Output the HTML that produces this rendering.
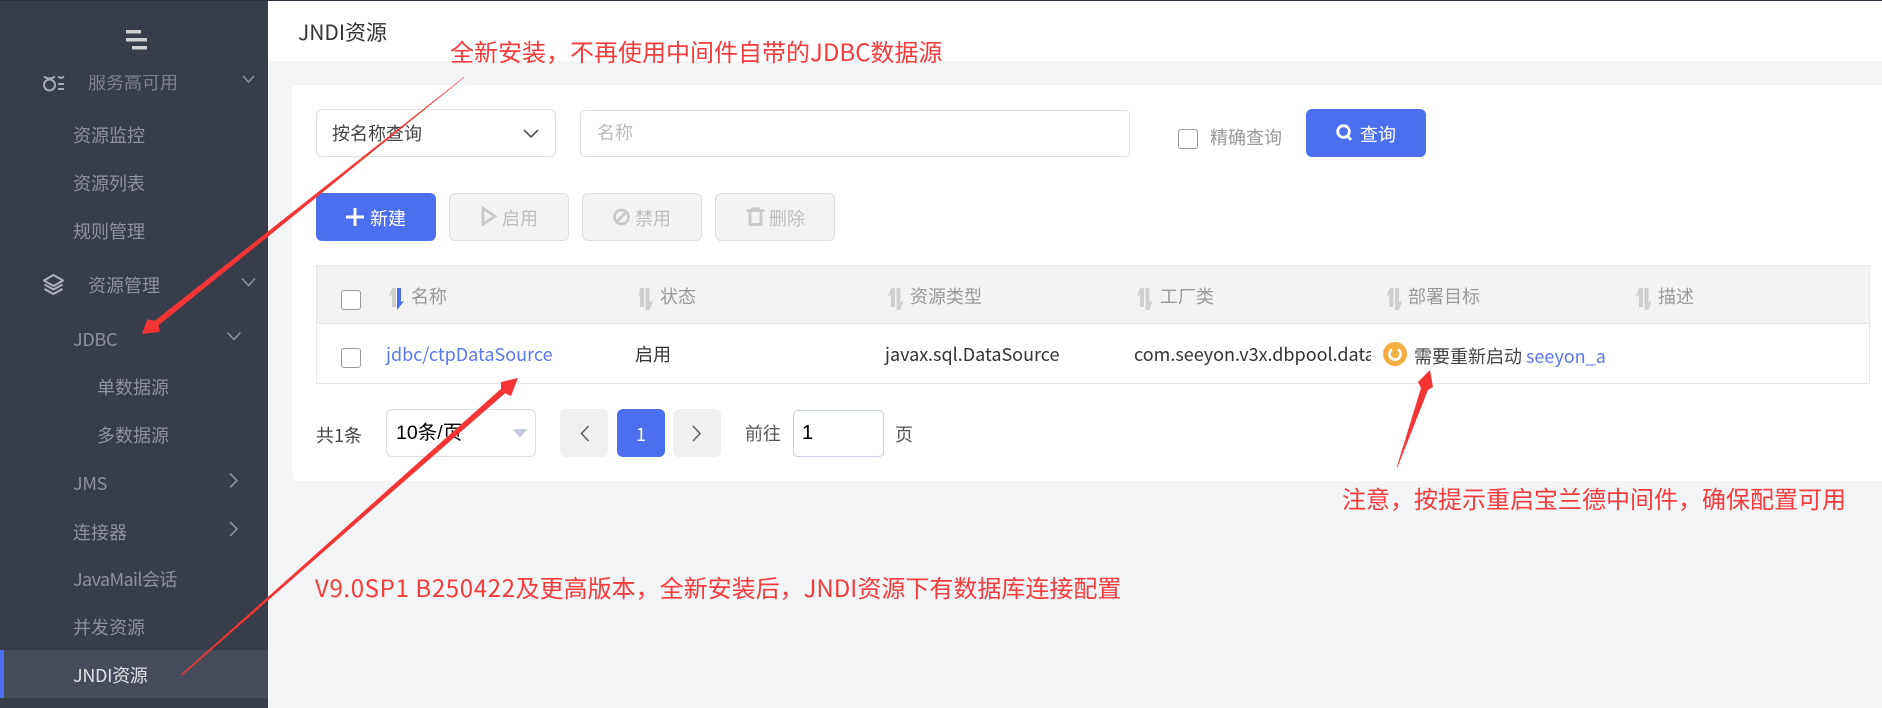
<!DOCTYPE html>
<html lang="zh-CN">
<head>
<meta charset="utf-8">
<title>JNDI资源</title>
<style>
html,body{margin:0;padding:0;width:1882px;height:708px;overflow:hidden;background:#f3f4f6}
body{position:relative;font-family:"Noto Sans CJK SC","Liberation Sans",sans-serif;font-size:18px;color:#333}
.b{position:absolute;box-sizing:border-box}
.t{position:absolute;white-space:nowrap;line-height:24px;font-size:18px}
.s{color:#8e929c}
.dis{background:#f3f3f3;border:1px solid #dedede;border-radius:6px;top:193px;height:48px;width:120px}
.gt{color:#bdbdbd}
.hd{color:#999}
.cb{width:20px;height:20px;background:#fff;border:1px solid #999;border-radius:3px}
.bl{color:#5b77ee}
.red{color:#f53b3b;font-size:24px;line-height:32px}
.lib{font-family:"Liberation Sans","Noto Sans CJK SC",sans-serif}
</style>
</head>
<body>
<!-- top line -->
<div class="b" style="left:268px;top:0;width:1614px;height:61px;background:#fff"></div>
<!-- sidebar -->
<div class="b" style="left:0;top:0;width:268px;height:708px;background:#383d4a"></div>
<div class="b" style="left:0;top:650px;width:268px;height:48px;background:#464c59"></div>
<div class="b" style="left:0;top:650px;width:4px;height:48px;background:#4a6eef"></div>
<div class="t s" style="left:88px;top:70px;color:#7e828c">服务高可用</div>
<div class="b" style="left:0;top:54px;width:268px;height:21px;background:#383d4a"></div>
<div class="t s" style="left:73px;top:123px">资源监控</div>
<div class="t s" style="left:73px;top:171px">资源列表</div>
<div class="t s" style="left:73px;top:219px">规则管理</div>
<div class="t s" style="left:88px;top:273px">资源管理</div>
<div class="t s" style="left:73px;top:327px;letter-spacing:-.3px">JDBC</div>
<div class="t s" style="left:97px;top:375px">单数据源</div>
<div class="t s" style="left:97px;top:423px">多数据源</div>
<div class="t s" style="left:73px;top:471px;letter-spacing:-.3px">JMS</div>
<div class="t s" style="left:73px;top:520px">连接器</div>
<div class="t s" style="left:73px;top:567px;letter-spacing:-.6px">JavaMail会话</div>
<div class="t s" style="left:73px;top:615px">并发资源</div>
<div class="t" style="left:73px;top:663px;color:#dfe1e6;letter-spacing:-.3px">JNDI资源</div>

<!-- header -->
<div class="t" style="left:298px;top:20px;color:#333;font-size:21px">JNDI资源</div>

<!-- card -->
<div class="b" style="left:292px;top:85px;width:1590px;height:396px;background:#fff;border-radius:6px 0 0 6px"></div>
<div class="b" style="left:316px;top:109px;width:240px;height:48px;border:1px solid #dcdfe6;border-radius:6px;background:#fff"></div>
<div class="t" style="left:332px;top:121px;color:#444">按名称查询</div>
<div class="b" style="left:580px;top:110px;width:550px;height:47px;border:1px solid #dcdfe6;border-radius:5px;background:#fff"></div>
<div class="t" style="left:597px;top:120px;color:#bbb">名称</div>
<div class="b cb" style="left:1178px;top:129px"></div>
<div class="t" style="left:1210px;top:125px;color:#999">精确查询</div>
<div class="b" style="left:1306px;top:109px;width:120px;height:48px;background:#4b6fef;border-radius:6px"></div>
<div class="t" style="left:1360px;top:122px;color:#fff">查询</div>

<!-- toolbar -->
<div class="b" style="left:316px;top:193px;width:120px;height:48px;background:#4b6fef;border-radius:6px"></div>
<div class="t" style="left:370px;top:206px;color:#fff">新建</div>
<div class="b dis" style="left:449px"></div>
<div class="t gt" style="left:502px;top:206px">启用</div>
<div class="b dis" style="left:582px"></div>
<div class="t gt" style="left:635px;top:206px">禁用</div>
<div class="b dis" style="left:715px"></div>
<div class="t gt" style="left:769px;top:206px">删除</div>

<!-- table -->
<div class="b" style="left:316px;top:265px;width:1554px;height:59px;background:#f3f3f3;border:1px solid #e6e6e6"></div>
<div class="b" style="left:316px;top:323px;width:1554px;height:61px;background:#fff;border:1px solid #e4e7ed;border-top:1px solid #e6e6e6"></div>
<div class="b cb" style="left:341px;top:290px"></div>
<div class="b cb" style="left:341px;top:348px"></div>
<div class="t hd" style="left:411px;top:284px">名称</div>
<div class="t hd" style="left:660px;top:284px">状态</div>
<div class="t hd" style="left:910px;top:284px">资源类型</div>
<div class="t hd" style="left:1160px;top:284px">工厂类</div>
<div class="t hd" style="left:1408px;top:284px">部署目标</div>
<div class="t hd" style="left:1658px;top:284px">描述</div>
<div class="t bl" style="left:386px;top:342px">jdbc/ctpDataSource</div>
<div class="t" style="left:635px;top:342px">启用</div>
<div class="t" style="left:885px;top:342px">javax.sql.DataSource</div>
<div class="t" style="left:1134px;top:342px;width:237px;overflow:hidden">com.seeyon.v3x.dbpool.datasource</div>
<div class="t" style="left:1414px;top:344px;color:#444">需要重新启动</div>
<div class="t bl" style="left:1526px;top:344px">seeyon_a</div>

<!-- pagination -->
<div class="t" style="left:316px;top:423px;color:#444">共1条</div>
<div class="b" style="left:386px;top:409px;width:150px;height:48px;border:1px solid #dcdfe6;border-radius:6px;background:#fff"></div>
<div class="t lib" style="left:396px;top:421px;font-size:19.5px;color:#000">10条/页</div>
<div class="b" style="left:560px;top:409px;width:48px;height:48px;background:#f0f0f0;border-radius:6px"></div>
<div class="b" style="left:617px;top:409px;width:48px;height:48px;background:#4b6fef;border-radius:6px"></div>
<div class="t" style="left:617px;top:422px;width:48px;text-align:center;color:#fff">1</div>
<div class="b" style="left:673px;top:409px;width:48px;height:48px;background:#f0f0f0;border-radius:6px"></div>
<div class="t" style="left:745px;top:421px;color:#555">前往</div>
<div class="b" style="left:793px;top:410px;width:91px;height:47px;border:1px solid #c5d0e6;border-radius:5px;background:#fff"></div>
<div class="t lib" style="left:802px;top:421px;font-size:20px;color:#000">1</div>
<div class="t" style="left:895px;top:422px;color:#555">页</div>

<!-- annotations -->
<div class="t red" style="left:450px;top:35px">全新安装，不再使用中间件自带的JDBC数据源</div>
<div class="t red" style="left:315px;top:571px"><span style="letter-spacing:.64px">V9.0SP1 B250422</span>及更高版本，全新安装后，JNDI资源下有数据库连接配置</div>
<div class="t red" style="left:1342px;top:482px">注意，按提示重启宝兰德中间件，确保配置可用</div>

<svg class="b" style="left:0;top:0" width="1882" height="708" viewBox="0 0 1882 708" xmlns="http://www.w3.org/2000/svg">
  <!-- top dark line -->
  <rect x="0" y="0" width="1882" height="1" fill="#2b3040"/>
  <!-- hamburger -->
  <g fill="#d0d0d0">
    <rect x="126" y="30" width="15" height="3.5"/>
    <rect x="126" y="38" width="21" height="3.5"/>
    <rect x="132" y="46" width="15" height="3.5"/>
  </g>
  <!-- service icon -->
  <g fill="none" stroke="#a8abb8" stroke-width="2">
    <circle cx="49.5" cy="85" r="5.5"/>
    <path d="M44 76.5q5.500 4 11 0"/>
    <path d="M58 76.500q3 2.500 6 0M58 84h6M58 89h6"/>
  </g>
  <!-- layers icon -->
  <g fill="none" stroke="#b0b3c2" stroke-width="2" stroke-linejoin="round">
    <path d="M53.500 275l9.500 5.500-9.500 5.500-9.500-5.500z"/>
    <path d="M44.500 284.500l9 5 9-5"/>
    <path d="M44.500 289l9 5 9-5"/>
  </g>
  <!-- sidebar chevrons -->
  <g fill="none" stroke="#8e929c" stroke-width="1.600">
    <path d="M243 76l5.500 6 5.500-6"/>
    <path d="M242 278.500l6.500 7 6.500-7"/>
    <path d="M227.500 332.500l6.500 7 6.500-7"/>
    <path d="M230 473.500l7 7-7 7"/>
    <path d="M230 522l7 7-7 7"/>
  </g>
  <!-- select chevron -->
  <path d="M524 130l7 7 7-7" fill="none" stroke="#555" stroke-width="1.600"/>
  <!-- search icon -->
  <g fill="none" stroke="#fff" stroke-width="2.800">
    <circle cx="1343.500" cy="131.500" r="5.800"/>
    <path d="M1347.500 136l3.500 4"/>
  </g>
  <!-- plus -->
  <g fill="#fff">
    <rect x="346" y="215.500" width="18" height="3"/>
    <rect x="353.500" y="208" width="3" height="18"/>
  </g>
  <!-- play -->
  <path d="M483 208.500v15.500l12-7.750z" fill="none" stroke="#c9c9c9" stroke-width="2.800" stroke-linejoin="miter"/>
  <!-- ban -->
  <g fill="none" stroke="#c9c9c9" stroke-width="2.800">
    <circle cx="621.500" cy="217" r="7"/>
    <path d="M617 221.500l9-9"/>
  </g>
  <!-- trash -->
  <g fill="none" stroke="#c9c9c9" stroke-width="2.800">
    <path d="M746.500 210.500h18"/>
    <path d="M750 210.500v14h11v-14"/>
  </g>
  <rect x="751" y="207.500" width="9" height="2" fill="#c9c9c9"/>
  <!-- sort icons -->
  <g fill="#cfcfcf">
    <path d="M392 288h4v19h-4v-12l-3 1z"/>
    <path d="M640 288l3 0h1v19h-4v-12l-1 1z"/>
    <path d="M645.500 288h4v14l3.500-1-3.500 9h-4z"/>
    <path d="M891 288h4v19h-4v-12l-3 1z"/><path d="M896.500 288h4v14l3-1-3 9h-4z"/>
    <path d="M1140 288h4v19h-4v-12l-3 1z"/><path d="M1145.500 288h4v14l3-1-3 9h-4z"/>
    <path d="M1389.500 288h4v19h-4v-12l-3 1z"/><path d="M1395 288h4v14l3-1-3 9h-4z"/>
    <path d="M1639 288h4v19h-4v-12l-3 1z"/><path d="M1644.500 288h4v14l3-1-3 9h-4z"/>
  </g>
  <path d="M397 288h4v14l3-1-7 9z" fill="#4b6fef"/>
  <!-- status icon -->
  <circle cx="1395" cy="354" r="12" fill="#f5ae42"/>
  <path d="M1392 349.500a5.500 5.500 0 1 0 6 0" fill="none" stroke="#fff" stroke-width="2.600"/>
  <!-- pagination icons -->
  <path d="M513 429h14l-7 9z" fill="#c0c8dc"/>
  <path d="M588.500 426l-7 7.500 7 7.500" fill="none" stroke="#666" stroke-width="1.600"/>
  <path d="M693 426l7 7.500-7 7.500" fill="none" stroke="#666" stroke-width="1.600"/>
  <!-- red arrows -->
  <g fill="#f53535">
    <path d="M464 77L154.800 320.700 147.300 319.300 142 334 160 331.700 158.600 325.300 464.300 77.400z"/>
    <path d="M181.300 674.300L501 388.700 501 382 518 378 511 396 505 393.200 182.300 675.300z"/>
    <path d="M1396.800 467L1421 388 1418 382 1430 370 1433 387 1428 390 1397.500 467.200z"/>
  </g>
</svg>
</body>
</html>
